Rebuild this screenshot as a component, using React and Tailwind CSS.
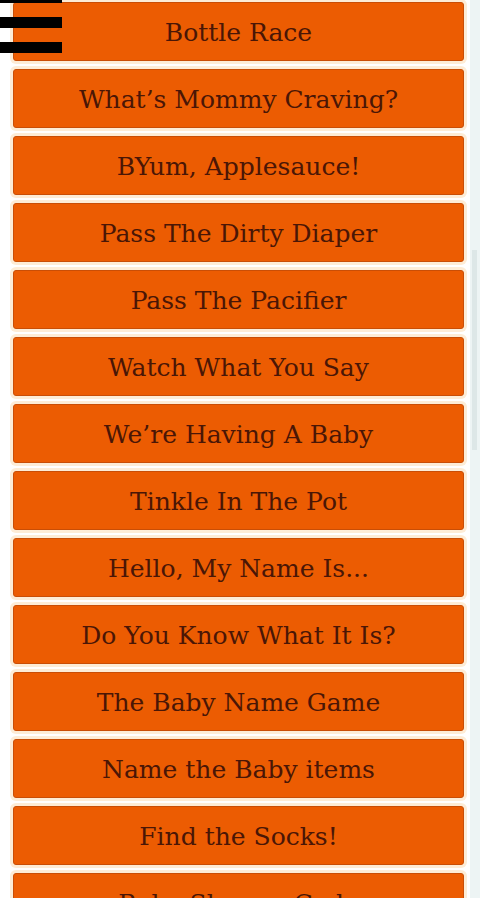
const games = [
  'Bottle Race',
  'What’s Mommy Craving?',
  'BYum, Applesauce!',
  'Pass The Dirty Diaper',
  'Pass The Pacifier',
  'Watch What You Say',
  'We’re Having A Baby',
  'Tinkle In The Pot',
  'Hello, My Name Is...',
  'Do You Know What It Is?',
  'The Baby Name Game',
  'Name the Baby items',
  'Find the Socks!',
  'Baby Shower Code',
];

export default function App() {
  return (
    <div className="relative h-[898px] w-[480px] overflow-hidden bg-white">
      <div className="flex">
        <div className="flex w-[470px] flex-col gap-[8px] pl-[13px] pr-[6px] pt-[2px]">
          {games.map((name) => (
            <button
              key={name}
              className="flex h-[59px] shrink-0 items-center justify-center rounded-[3px] border border-[#c94e06] bg-[#ec5c02] pt-[2px] text-[25px] text-[#4a1606] shadow-[0_0_0_3px_#fdecd6]"
              style={{ fontFamily: '"DejaVu Serif", serif' }}
            >
              {name}
            </button>
          ))}
        </div>
        <div className="flex h-[898px] w-[10px] bg-[#edf4f4] pl-[2px] pt-[250px]">
          <div className="h-[200px] w-[5px] bg-[#dde7e7]" />
        </div>
      </div>

      <div className="absolute left-0 top-[-8px] flex w-[62px] flex-col gap-[14px]">
        <span className="h-[11px] bg-black" />
        <span className="h-[11px] bg-black" />
        <span className="h-[11px] bg-black" />
      </div>
    </div>
  );
}
